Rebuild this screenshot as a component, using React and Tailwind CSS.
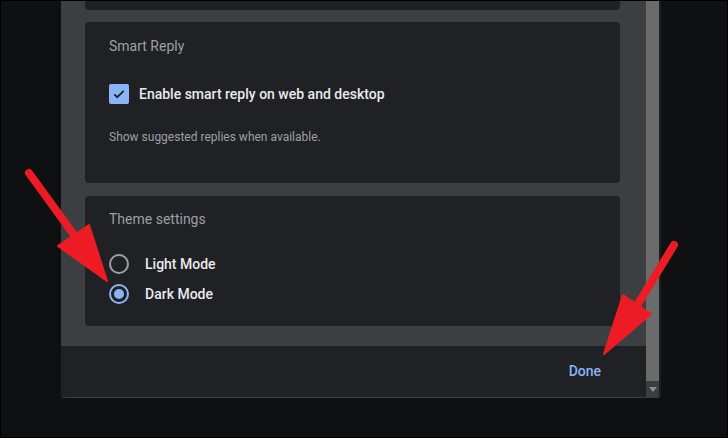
export default function App() {
  return (
    <div className="relative h-[438px] w-[728px] overflow-hidden border border-black bg-[#0f1012] font-['Roboto',sans-serif]">
      <div className="ml-[60px] flex h-[397px] w-[600px] overflow-hidden rounded-b-[4px] bg-[#202124] border-b border-[#3a3d40]">
        {/* dialog body */}
        <div className="flex w-[585px] flex-col">
          <div className="flex flex-1 flex-col bg-[#3b3f42] px-[24px]">
            <div className="h-[9px] w-[535px] rounded-b-[4px] bg-[#202124]" />

            <div className="mt-[12px] h-[161px] w-[535px] rounded-[4px] bg-[#202124] px-[24px] pt-[14px]">
              <div className="text-[14px] leading-[20px] text-[#9aa0a6]">Smart Reply</div>
              <div className="mt-[28px] flex h-[20px] items-center">
                <span className="flex h-[20px] w-[20px] items-center justify-center rounded-[2px] bg-[#8ab4f8]">
                  <svg width="14" height="14" viewBox="0 0 24 24" fill="none" stroke="#202124" strokeWidth="3">
                    <path d="M4 12.5l5 5L20 6.5" />
                  </svg>
                </span>
                <span className="ml-[10px] text-[14px] font-medium text-[#e8eaed]">Enable smart reply on web and desktop</span>
              </div>
              <div className="mt-[25px] text-[12px] leading-[16px] text-[#9aa0a6]">Show suggested replies when available.</div>
            </div>

            <div className="mt-[13px] h-[130px] w-[535px] rounded-[4px] bg-[#202124] px-[24px] pt-[13px]">
              <div className="text-[14px] leading-[20px] text-[#9aa0a6]">Theme settings</div>
              <div className="mt-[25px] flex h-[20px] items-center">
                <span className="h-[20px] w-[20px] rounded-full border-2 border-[#9aa0a6]" />
                <span className="ml-[16px] text-[14px] font-medium text-[#e8eaed]">Light Mode</span>
              </div>
              <div className="mt-[10px] flex h-[20px] items-center">
                <span className="flex h-[20px] w-[20px] items-center justify-center rounded-full border-2 border-[#8ab4f8]">
                  <span className="h-[10px] w-[10px] rounded-full bg-[#8ab4f8]" />
                </span>
                <span className="ml-[16px] text-[14px] font-medium text-[#e8eaed]">Dark Mode</span>
              </div>
            </div>
            <div className="h-[20px]" />
          </div>
          <div className="flex h-[51px] items-center justify-end pr-[45px]">
            <span className="text-[14px] font-medium text-[#8ab4f8]">Done</span>
          </div>
        </div>

        {/* scrollbar */}
        <div className="flex w-[13px] flex-col">
          <div className="flex-1 bg-[#6b6b6b]" />
          <div className="flex h-[16px] items-center justify-center bg-[#3c3d3f]">
            <svg width="8" height="5" viewBox="0 0 8 5">
              <path d="M0 0h8L4 5z" fill="#8c8c8c" />
            </svg>
          </div>
        </div>
        <div className="w-[2px] bg-[#1c1d1f]" />
      </div>

      {/* annotation arrows */}
      <svg className="pointer-events-none absolute left-0 top-0" width="728" height="438" viewBox="0 0 728 438">
        <g fill="#ed1c24" stroke="#ed1c24" strokeLinecap="round" strokeLinejoin="round">
          <path d="M28 172L76 238" strokeWidth="8" fill="none" />
          <path d="M57 245L88 224L106 280Z" strokeWidth="2" />
          <path d="M673 244L637 303" strokeWidth="8" fill="none" />
          <path d="M622 294L650 313L603 353Z" strokeWidth="2" />
        </g>
      </svg>
    </div>
  );
}
